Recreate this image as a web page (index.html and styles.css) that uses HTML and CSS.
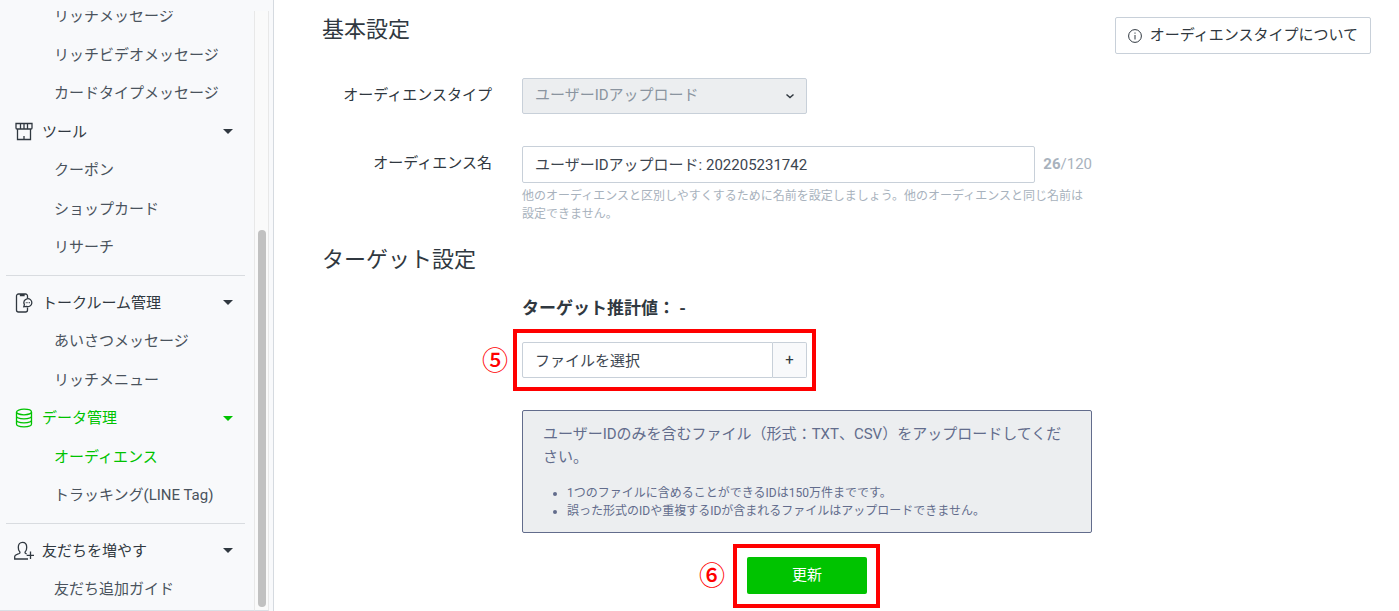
FILE: index.html
```html
<!DOCTYPE html>
<html lang="ja">
<head>
    <meta charset="UTF-8">
    <meta name="viewport" content="width=device-width, initial-scale=1.0">
    <title>オーディエンス</title>
    <link rel="stylesheet" href="styles.css">
</head>
<body>
    <div class="layout">
        <aside class="sidebar">
            <nav class="menu">
                <div class="menu-list">
                    <a class="menu-item" href="#">リッチメッセージ</a>
                    <a class="menu-item" href="#">リッチビデオメッセージ</a>
                    <a class="menu-item" href="#">カードタイプメッセージ</a>
                    <button class="menu-group" type="button">
                        <svg class="menu-icon" viewBox="0 0 20 20"><path d="M2 1.500h16v4.500a1 1 0 0 1-1 1h-14a1 1 0 0 1-1-1zM6.500 1.500v5M10 1.500v5M13.500 1.500v5M3.500 7v10.500h13V7M10 14v3.500"/></svg>
                        <span>ツール</span>
                        <span class="caret"></span>
                    </button>
                    <a class="menu-item" href="#">クーポン</a>
                    <a class="menu-item" href="#">ショップカード</a>
                    <a class="menu-item" href="#">リサーチ</a>
                    <hr class="menu-divider">
                    <button class="menu-group" type="button">
                        <svg class="menu-icon" viewBox="0 0 20 20"><path d="M13.500 5V3a2 2 0 0 0-2-2h-7a2 2 0 0 0-2 2v14a2 2 0 0 0 2 2h7a2 2 0 0 0 2-2v-2.500M6.500 1v1.500h3.500V1"/><path d="M9.800 13.800l.600-2.100a4 4 0 1 1 2 1.700z"/><path d="M11.800 9.700h.8M13.500 9.700h.8M15.200 9.700h.8"/></svg>
                        <span>トークルーム管理</span>
                        <span class="caret"></span>
                    </button>
                    <a class="menu-item" href="#">あいさつメッセージ</a>
                    <a class="menu-item" href="#">リッチメニュー</a>
                    <button class="menu-group active" type="button">
                        <svg class="menu-icon" viewBox="0 0 20 20"><ellipse cx="10" cy="4" rx="7.500" ry="2.800"/><path d="M2.500 4v12c0 1.600 3.400 2.800 7.500 2.800s7.500-1.200 7.500-2.800V4M2.500 8c0 1.600 3.400 2.800 7.500 2.800s7.500-1.200 7.500-2.800M2.500 12c0 1.600 3.400 2.800 7.500 2.800s7.500-1.200 7.500-2.800"/></svg>
                        <span>データ管理</span>
                        <span class="caret"></span>
                    </button>
                    <a class="menu-item active" href="#">オーディエンス</a>
                    <a class="menu-item" href="#">トラッキング(LINE Tag)</a>
                    <hr class="menu-divider">
                    <button class="menu-group" type="button">
                        <svg class="menu-icon" viewBox="0 0 20 20"><path d="M14 18H.700v-2.500c0-1.200 1-1.800 2.300-2.200l2.300-.8c.8-.3.900-1.300.2-2.100C4.500 9.300 4.300 7.800 4.300 6.200c0-3 1.700-4.900 4.200-4.900s4.200 1.900 4.200 4.900c0 1.600-.2 3.100-1.200 4.200-.7.800-.6 1.800.2 2.100l1 .4M16.500 10.500v7.500M12.700 14.300H20"/></svg>
                        <span>友だちを増やす</span>
                        <span class="caret"></span>
                    </button>
                    <a class="menu-item" href="#">友だち追加ガイド</a>
                </div>
            </nav>
            <div class="scroll-track">
                <div class="scroll-thumb"></div>
            </div>
        </aside>

        <main class="content">
            <form class="settings">
                <h2 class="section-title">基本設定</h2>
                <div class="form-row">
                    <label class="form-label" for="audienceType">オーディエンスタイプ</label>
                    <div class="select-box">
                        <select id="audienceType" class="control" disabled>
                            <option>ユーザーIDアップロード</option>
                        </select>
                        <svg class="chevron" viewBox="0 0 10 10"><path d="M1.500 3.500L5 6.500l3.500-3"/></svg>
                    </div>
                </div>
                <div class="form-row">
                    <label class="form-label" for="audienceName">オーディエンス名</label>
                    <div>
                        <div class="name-line">
                            <input id="audienceName" class="control" type="text" maxlength="120" value="ユーザーIDアップロード: 202205231742">
                            <span class="counter"><b>26</b>/120</span>
                        </div>
                        <p class="help">他のオーディエンスと区別しやすくするために名前を設定しましょう。他のオーディエンスと同じ名前は設定できません。</p>
                    </div>
                </div>

                <h2 class="section-title">ターゲット設定</h2>
                <div class="target">
                    <h3 class="estimate">ターゲット推計値： -</h3>
                    <div class="file-picker">
                        <input class="control" type="text" aria-label="ファイル" value="ファイルを選択" readonly>
                        <button class="file-add" type="button" aria-label="ファイルを追加">+</button>
                        <span class="mark-frame"></span>
                        <span class="mark-number">⑤</span>
                    </div>
                    <div class="notice">
                        <p>ユーザーIDのみを含むファイル（形式：TXT、CSV）をアップロードしてください。</p>
                        <ul>
                            <li>1つのファイルに含めることができるIDは150万件までです。</li>
                            <li>誤った形式のIDや重複するIDが含まれるファイルはアップロードできません。</li>
                        </ul>
                    </div>
                    <div class="submit">
                        <button class="btn-update" type="submit">更新</button>
                        <span class="mark-frame"></span>
                        <span class="mark-number">⑥</span>
                    </div>
                </div>
            </form>

            <button class="btn-about" type="button">
                <svg class="info-icon" viewBox="0 0 14 14"><circle cx="7" cy="7" r="6.400"/><path d="M7 6v4.500M7 3.500v1.200"/></svg>
                オーディエンスタイプについて
            </button>
        </main>
    </div>
</body>
</html>
```

FILE: styles.css
```css
* {
    box-sizing: border-box;
}
body {
    margin: 0;
    font-family: Roboto, "Noto Sans CJK JP", sans-serif;
    font-size: 15px;
    line-height: 1.5;
    color: #303840;
    background-color: #fff;
}
button, input, select {
    font: inherit;
    color: inherit;
}
button {
    cursor: pointer;
}
.layout {
    display: flex;
    height: 100vh;
    overflow: hidden;
}

/* Sidebar */
.sidebar {
    display: flex;
    flex: none;
    width: 274px;
    padding: 11px 4px 0 0;
    background-color: #f8f9fb;
    border-right: 1px solid #d5dae0;
}
.menu {
    flex: 1;
    overflow: hidden;
    border-bottom: 1px solid #d9dfe5;
}
.menu-list {
    margin-top: -14px;
    padding: 0 9px 0 6px;
}
.menu-item {
    display: block;
    padding: 8px 0 8px 48px;
    color: #4a535d;
    text-decoration: none;
}
.menu-group {
    display: flex;
    align-items: center;
    gap: 8px;
    width: 100%;
    padding: 8px 12px 8px 8px;
    border: none;
    background: none;
    text-align: left;
}
.menu-item.active,
.menu-group.active {
    color: #00c300;
}
.menu-icon {
    width: 20px;
    height: 20px;
    fill: none;
    stroke: currentColor;
    stroke-width: 1.3;
}
.caret {
    margin-left: auto;
    border: 5px solid transparent;
    border-top-color: currentColor;
    border-bottom: none;
}
.menu-divider {
    margin: 8px 0;
    border: none;
    border-top: 1px solid #d9dce0;
}
.scroll-track {
    display: flex;
    width: 15px;
    padding: 219px 2px 3px 3px;
    background-color: #fafafa;
    border: 1px solid #e8e8e8;
    border-top: none;
    border-bottom-color: #d9dfe5;
}
.scroll-thumb {
    flex: 1;
    border-radius: 4px;
    background-color: #c1c1c1;
}

/* Main form */
.content {
    display: flex;
    flex: 1;
    justify-content: space-between;
    align-items: flex-start;
    gap: 20px;
    padding: 13px 28px 0 48px;
}
.settings {
    flex: 0 1 770px;
}
.section-title {
    margin: 0 0 31px;
    font-size: 22px;
    font-weight: 400;
    line-height: 34px;
}
.form-row {
    display: grid;
    grid-template-columns: 170px 1fr;
    gap: 30px;
    margin-bottom: 32px;
}
.form-label {
    padding-top: 6px;
    text-align: right;
}
.control {
    width: 100%;
    height: 36px;
    padding: 0 12px 2px;
    border: 1px solid #c8d0d9;
    border-radius: 2px;
    background-color: #fff;
    color: #3c454f;
    outline: none;
}
.select-box {
    position: relative;
    width: 285px;
}
.select-box .control {
    appearance: none;
    background-color: #eceef0;
    color: #8a949f;
    opacity: 1;
}
.chevron {
    position: absolute;
    top: 13px;
    right: 12px;
    width: 10px;
    height: 10px;
    fill: none;
    stroke: #303840;
    stroke-width: 1.5;
}
.name-line {
    display: flex;
    align-items: center;
    gap: 8px;
}
.name-line .control {
    flex: 1;
    height: 37px;
}
.counter {
    color: #a8b2bd;
}
.help {
    margin: 4px 0 0;
    font-size: 12px;
    color: #a8b2bd;
}
.form-row + .section-title {
    margin: -12px 0 19px;
}
.target {
    margin-left: 200px;
}
.estimate {
    margin: 0 0 21px;
    font-size: 17px;
    line-height: 25px;
}
.file-picker {
    position: relative;
    display: flex;
    width: 285px;
}
.file-picker .control {
    flex: 1;
    min-width: 0;
    border-radius: 2px 0 0 2px;
}
.file-add {
    width: 34px;
    padding: 0;
    border: 1px solid #c8d0d9;
    border-left: none;
    border-radius: 0 2px 2px 0;
    background-color: #f8f9fb;
}
.notice {
    margin: 32px 0 24px;
    padding: 12px 20px;
    border: 1px solid #626c8c;
    border-radius: 2px;
    background-color: #eceef0;
    color: #626c8c;
}
.notice p {
    margin: 0 0 16px;
}
.notice ul {
    margin: 0;
    padding-left: 24px;
    font-size: 12px;
}
.submit {
    position: relative;
    width: 120px;
    margin: 0 auto;
}
.btn-update {
    display: block;
    width: 100%;
    height: 37px;
    border: none;
    border-radius: 2px;
    background-color: #00c300;
    color: #fff;
}
.btn-about {
    display: flex;
    flex: none;
    align-items: center;
    gap: 8px;
    height: 37px;
    margin-top: 4px;
    padding: 0 12px;
    border: 1px solid #c8d0d9;
    border-radius: 2px;
    background-color: #fff;
    white-space: nowrap;
}
.info-icon {
    width: 14px;
    height: 14px;
    fill: none;
    stroke: currentColor;
}

/* Step marks drawn over the form */
.mark-frame {
    position: absolute;
    inset: -13px -9px;
    border: 4px solid #f00;
    pointer-events: none;
}
.submit .mark-frame {
    inset: -13px -13px -14px -14px;
}
.mark-number {
    position: absolute;
    top: 0;
    right: 100%;
    margin-right: 14px;
    font-size: 26px;
    font-weight: 500;
    line-height: 38px;
    color: #f00;
}
.submit .mark-number {
    margin-right: 22px;
}
```
